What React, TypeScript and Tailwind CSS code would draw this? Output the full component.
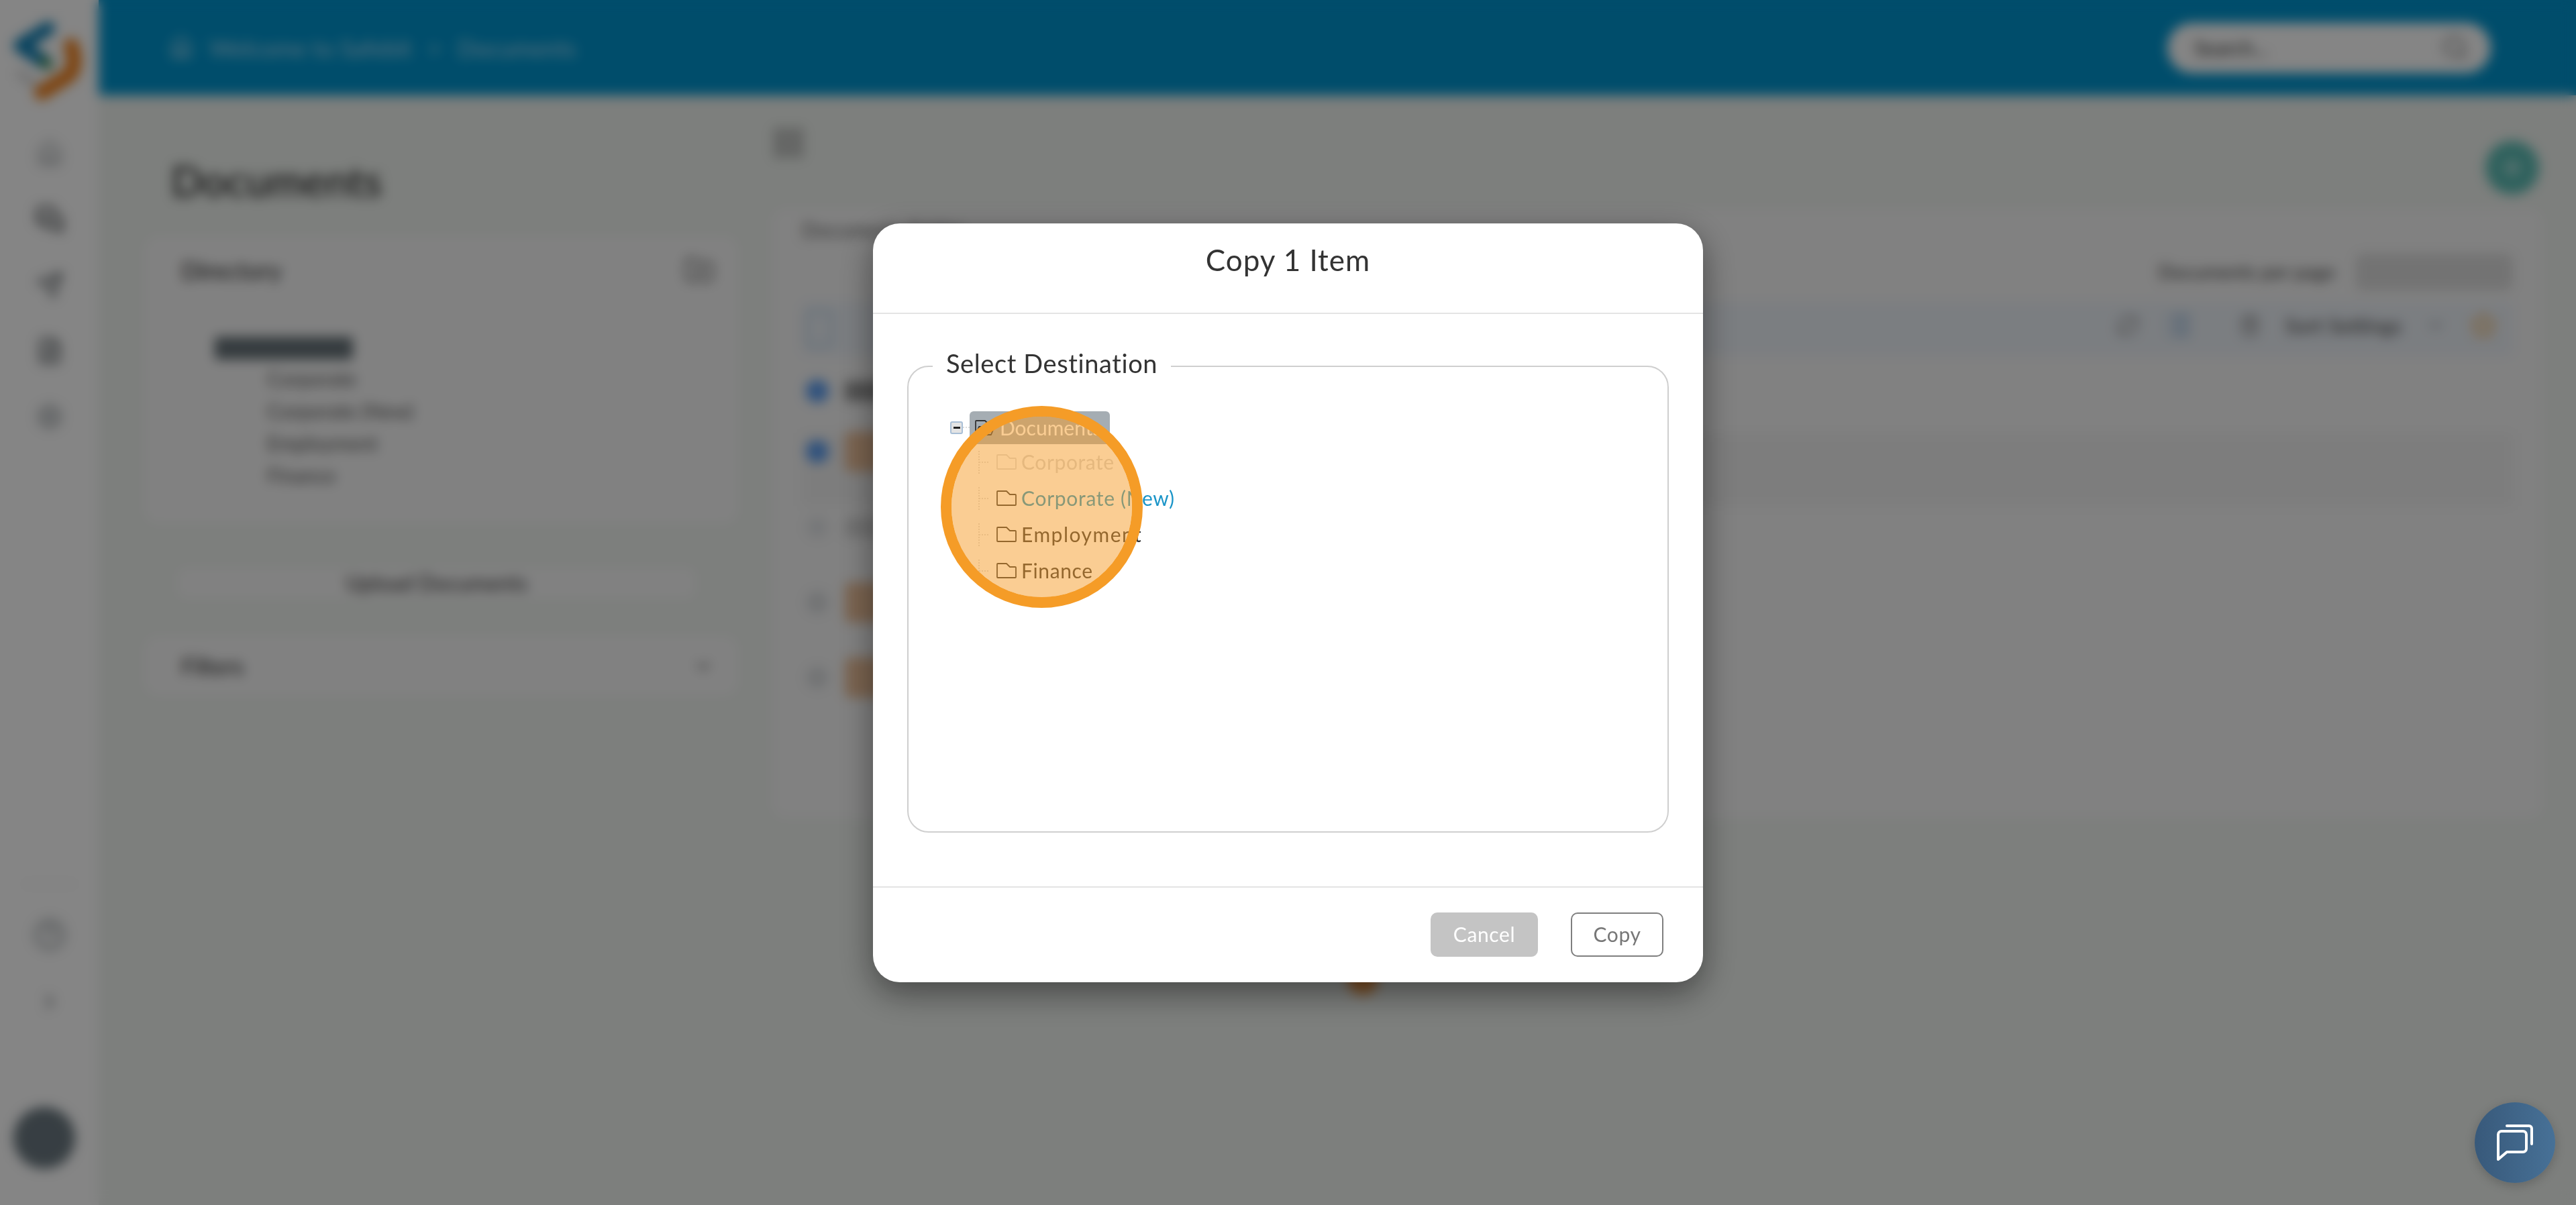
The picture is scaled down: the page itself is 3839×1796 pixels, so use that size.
import { House, Search, FolderPlus, MessagesSquare, Send, FileText, Settings, CircleHelp, ChevronRight, ChevronDown, Plus, RefreshCw, List, LayoutGrid, Trash2, Star } from "lucide-react";

const SIDE_ICONS = [
  { Icon: House, cls: "text-[#a0a5a8]" },
  { Icon: MessagesSquare, cls: "text-[#1a1f22]" },
  { Icon: Send, cls: "text-[#5d6367]" },
  { Icon: FileText, cls: "text-[#4d5458]" },
  { Icon: Settings, cls: "text-[#8d9498]" },
];

const DIR_ITEMS = ["Corporate", "Corporate (New)", "Employment", "Finance"];

const ROWS = [
  { h: "h-[116px]", pb: "pb-[10px]", check: "bg-[#5a9cf0]", thumb: "h-[30px] w-[70px] rounded bg-[#9a9a9a]", band: false },
  { h: "h-[108px]", pb: "pb-[54px]", check: "bg-[#5a9cf0]", thumb: "h-[60px] w-[70px] rounded-[8px] bg-[#ecc09a]", band: true },
  { h: "h-[88px]", pb: "pb-[24px]", check: "bg-[#e4e6e8]", thumb: "h-[30px] w-[70px] rounded bg-[#d8d8d8]", band: false },
  { h: "h-[112px]", pb: "pb-0", check: "bg-[#dcdee0]", thumb: "h-[60px] w-[70px] rounded-[8px] bg-[#ecc09a]", band: false },
  { h: "h-[112px]", pb: "pb-0", check: "bg-[#dcdee0]", thumb: "h-[60px] w-[70px] rounded-[8px] bg-[#ecc09a]", band: false },
];

const TREE = [
  { label: "Corporate", text: "text-[#d4d4d4]", icon: "text-[#dcdcdc]", track: "tracking-[0.6px]" },
  { label: "Corporate (New)", text: "text-[#1b95c8]", icon: "text-[#333333]", track: "tracking-[0.7px]" },
  { label: "Employment", text: "text-[#333333]", icon: "text-[#333333]", track: "tracking-[1.5px]" },
  { label: "Finance", text: "text-[#333333]", icon: "text-[#333333]", track: "tracking-[0.6px]" },
];

function Logo() {
  return (
    <svg viewBox="0 0 130 150" className="h-[150px] w-[130px]" fill="none" strokeLinecap="round" strokeLinejoin="round">
      <path d="M72 36 30 62l36 24" stroke="#0d7fb5" strokeWidth="20" />
      <path d="M106 62c8 24 4 40-6 46l-38 24" stroke="#f07f1a" strokeWidth="22" />
      <path d="M30 104l20 14" stroke="#d8d8d8" strokeWidth="12" />
      <path d="M66 86l6 4" stroke="#3c8a4a" strokeWidth="14" />
    </svg>
  );
}

function TreeFolder({ className }: { className: string }) {
  return (
    <svg viewBox="0 0 30 23" className={`h-[23px] w-[30px] shrink-0 ${className}`} fill="none" stroke="currentColor" strokeWidth="1.8" strokeLinejoin="round">
      <path d="M2 1h13l5 5h8a1 1 0 0 1 1 1v14a1 1 0 0 1-1 1H2a1 1 0 0 1-1-1V2a1 1 0 0 1 1-1z" />
    </svg>
  );
}

function Connector() {
  return (
    <svg viewBox="0 0 16 34" className="h-[34px] w-[16px] shrink-0" fill="none" stroke="#dcdcdc" strokeWidth="2" strokeDasharray="2 2">
      <path d="M1 0v34M1 17h15" />
    </svg>
  );
}

function Background() {
  return (
    <div className="flex h-[1796px] w-[3839px] overflow-hidden bg-[#eff3ef] font-['Lato',sans-serif] text-[#333333]">
      <aside className="flex w-[147px] shrink-0 flex-col items-center bg-white">
        <div className="flex h-[170px] w-full items-start pt-[6px]">
          <Logo />
        </div>
        <div className="flex flex-col gap-[56px] pt-[38px]">
          {SIDE_ICONS.map(({ Icon, cls }, i) => (
            <Icon key={i} className={`h-[42px] w-[42px] ${cls}`} />
          ))}
        </div>
        <div className="mt-[675px] h-px w-[80px] bg-[#dddddd]" />
        <CircleHelp className="mt-[50px] h-[50px] w-[50px] text-[#8d9498]" />
        <ChevronRight className="mt-[58px] h-[34px] w-[34px] text-[#4d5357]" />
        <div className="mt-[140px] mr-[16px] h-[92px] w-[92px] rounded-full bg-[#6a7880]" />
      </aside>

      <div className="flex min-w-0 flex-1 flex-col">
        <header className="flex h-[142px] shrink-0 items-center justify-between bg-[#0094ce] pr-[127px] pl-[105px] text-[35px] text-white/70">
          <div className="flex items-center gap-[24px]">
            <House className="h-[36px] w-[36px]" />
            <span>Welcome to Safebit</span>
            <span>&gt;</span>
            <span>Documents</span>
          </div>
          <div className="flex h-[75px] w-[482px] items-center justify-between rounded-full bg-white pr-[32px] pl-[40px] text-[30px] text-[#333333]">
            <span>Search...</span>
            <Search className="h-[42px] w-[42px] text-[#777777]" />
          </div>
        </header>

        <main className="flex min-h-0 flex-1">
          <section className="w-[989px] shrink-0 pl-[68px]">
            <h1 className="pt-[82px] pl-[40px] text-[62px] leading-[90px] font-medium text-[#222222]">Documents</h1>
            <div className="mt-[38px] h-[428px] w-[885px] rounded-[20px] bg-[#f8f8f8] pt-[24px] pr-[35px] pl-[55px]">
              <div className="flex items-center justify-between">
                <span className="text-[36px] font-medium text-[#333333]">Directory</span>
                <FolderPlus className="h-[46px] w-[46px] text-[#777777]" />
              </div>
              <div className="pt-[72px] pl-[50px]">
                <div className="h-[34px] w-[206px] rounded bg-[#667278]" />
                <div className="flex flex-col gap-[12px] pt-[10px] pl-[78px] text-[30px] leading-[36px] text-[#555555]">
                  {DIR_ITEMS.map((item) => (
                    <span key={item}>{item}</span>
                  ))}
                </div>
              </div>
            </div>
            <div className="mt-[66px] ml-[50px] flex h-[46px] w-[771px] items-center justify-center rounded-[10px] bg-[#f8f8f8] text-[32px] font-medium text-[#444444]">
              Upload Documents
            </div>
            <div className="mt-[56px] flex h-[89px] w-[885px] items-center justify-between rounded-[20px] bg-[#f8f8f8] pr-[35px] pl-[55px]">
              <span className="text-[34px] font-medium text-[#333333]">Filters</span>
              <ChevronDown className="h-[34px] w-[34px] text-[#555555]" />
            </div>
          </section>

          <section className="min-w-0 flex-1 pr-[49px] pl-[14px]">
            <div className="flex h-[168px] items-start justify-between pt-[46px] pr-[6px]">
              <LayoutGrid className="h-[50px] w-[50px] text-[#8a8a8a]" />
              <div className="mt-[22px] flex h-[80px] w-[80px] items-center justify-center rounded-full bg-[#5cbcb4]">
                <Plus className="h-[40px] w-[40px] text-white" />
              </div>
            </div>
            <div className="h-[910px] rounded-[20px] bg-[#f7f7f7] px-[45px]">
              <div className="flex h-[140px] justify-between">
                <span className="pt-[10px] text-[30px] text-[#666666]">Documents Folder</span>
                <div className="flex items-center gap-[30px] pt-[50px]">
                  <span className="text-[29px] text-[#444444]">Documents per page</span>
                  <div className="h-[55px] w-[235px] rounded-[10px] bg-[#dddddd]" />
                </div>
              </div>
              <div className="flex h-[80px] items-start justify-between rounded-[8px] bg-[#ecf1f7] pt-[12px] pr-[24px] pl-[6px]">
                <div className="h-[56px] w-[40px] rounded-[6px] border-4 border-[#bcd0e6]" />
                <div className="flex items-center gap-[36px] text-[#888888]">
                  <RefreshCw className="h-[34px] w-[34px]" />
                  <List className="mr-[32px] h-[44px] w-[44px] text-[#6a9ccc]" />
                  <Trash2 className="h-[34px] w-[34px]" />
                  <span className="text-[31px] text-[#444444]">Sort Settings</span>
                  <ChevronDown className="h-[30px] w-[30px]" />
                  <Star className="h-[40px] w-[40px] text-[#f5ac47]" />
                </div>
              </div>
              {ROWS.map((row, i) => (
                <div key={i} className={`flex items-center gap-[24px] pl-[6px] ${row.h} ${row.pb} ${row.band ? "bg-[#f0f0f0]" : ""}`}>
                  <div className={`h-[34px] w-[34px] rounded-full ${row.check}`} />
                  <div className={row.thumb} />
                </div>
              ))}
            </div>
          </section>
        </main>
      </div>
    </div>
  );
}

function CopyDialog() {
  return (
    <div className="flex h-[1131px] w-[1237px] flex-col overflow-hidden rounded-[40px] bg-white font-['Lato',sans-serif]">
      <div className="flex h-[135px] shrink-0 items-center justify-center border-b-2 border-[#e4e4e4] pb-[24px] text-[44px] tracking-[1px] text-[#333333]">
        Copy 1 Item
      </div>
      <div className="flex-1 px-[51px] pt-[50px]">
        <fieldset className="h-[723px] rounded-[32px] border-2 border-[#cfcfcf]">
          <legend className="ml-[36px] px-[20px] pb-[10px] text-[38px] leading-[46px] tracking-[0.6px] text-[#333333]">Select Destination</legend>
          <div className="pt-[39px] pl-[62px] text-[30px]">
            <div className="flex h-[49px] items-center">
              <div className="flex h-[19px] w-[19px] shrink-0 items-center justify-center rounded-[3px] border-2 border-[#a9bfd6] bg-[#e4e4e4]">
                <div className="h-[3px] w-[10px] bg-[#222222]" />
              </div>
              <div className="h-px w-[10px] border-t-2 border-dotted border-[#dcdcdc]" />
              <div className="flex h-[49px] w-[209px] items-center gap-[7px] rounded-t-[6px] bg-[#a5adb3] pl-[8px] text-white">
                <svg viewBox="0 0 30 23" className="h-[23px] w-[30px] shrink-0" fill="none" stroke="#333333" strokeWidth="1.8" strokeLinejoin="round">
                  <path d="M1 21V2a1 1 0 0 1 1-1h13l5 5h6a1 1 0 0 1 1 1v3M1 21l5-11h23l-5 12H2a1 1 0 0 1-1-1z" />
                </svg>
                <span>Documents</span>
              </div>
            </div>
            {TREE.map((item) => (
              <div key={item.label} className="flex h-[54px] items-center pl-[42px]">
                <Connector />
                <div className="w-[11px] shrink-0" />
                <TreeFolder className={item.icon} />
                <span className={`pl-[7px] ${item.track} ${item.text}`}>{item.label}</span>
              </div>
            ))}
          </div>
        </fieldset>
      </div>
      <div className="flex h-[143px] shrink-0 items-start justify-end gap-[49px] border-t-2 border-[#e4e4e4] pt-[37px] pr-[59px] text-[30px] tracking-[0.6px]">
        <button className="h-[66px] w-[160px] rounded-[10px] bg-[#c4c4c4] text-white">Cancel</button>
        <button className="h-[66px] w-[138px] rounded-[10px] border-2 border-[#7f7f7f] bg-white text-[#777777]">Copy</button>
      </div>
    </div>
  );
}

export default function App() {
  return (
    <div className="relative h-[1796px] w-[3839px] overflow-hidden">
      <Background />
      {/* stray thumbnail corner poking out under the dialog */}
      <div className="absolute top-[1440px] left-[2008px] h-[42px] w-[46px] rounded-full bg-[#f09a4a]" />
      <div className="absolute inset-0 flex items-center justify-center bg-black/[.48] backdrop-blur-[9px]">
        <div className="rounded-[40px] shadow-[0_16px_50px_rgba(0,0,0,0.45)]">
          <CopyDialog />
        </div>
      </div>
      {/* click highlight over the tree */}
      <div className="absolute top-[605px] left-[1402px] h-[301px] w-[301px] rounded-full border-[16px] border-[#f59c27] bg-[#f59c27]/50 bg-clip-padding" />
      <button className="absolute top-[1643px] left-[3688px] flex h-[120px] w-[120px] items-center justify-center rounded-full bg-gradient-to-r from-[#38597a] to-[#477197] shadow-[0_4px_16px_rgba(0,0,0,0.2)]">
        <svg viewBox="0 0 54 54" className="h-[54px] w-[54px]" fill="none" stroke="white" strokeWidth="4" strokeLinecap="round" strokeLinejoin="round">
          <path d="M2 52V15a5 5 0 0 1 5-5h32a5 5 0 0 1 5 5v21a5 5 0 0 1-5 5H15z" />
          <path d="M15 2h33a4 4 0 0 1 4 4v23" />
        </svg>
      </button>
    </div>
  );
}
